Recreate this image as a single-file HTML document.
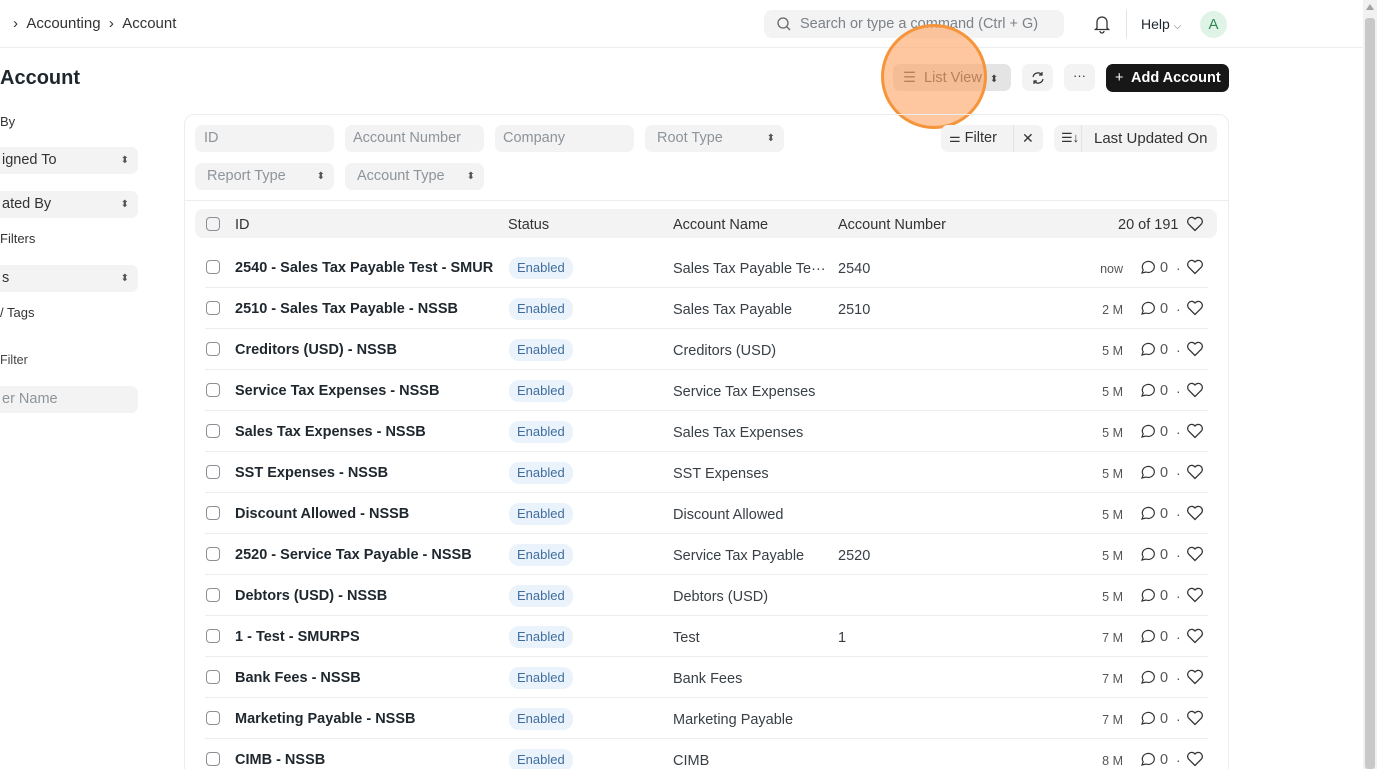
<!DOCTYPE html>
<html style="overflow:hidden;height:769px"><head><meta charset="utf-8">
<style>
*{box-sizing:border-box;margin:0;padding:0}
body{width:1377px;height:769px;overflow:hidden;background:#fff;font-family:"Liberation Sans",sans-serif;color:#1f272e;position:relative}
.a{position:absolute;white-space:nowrap}
.sel{position:absolute;background:#f3f3f3;border-radius:7px;height:27px;font-size:14.5px;color:#8d949a;line-height:27px;padding-left:12px}
.car{position:absolute;right:10px;top:0;font-size:10px;color:#555;letter-spacing:-1px}
.row{position:absolute;left:205px;width:1003px;height:41px;border-bottom:1px solid #ebeef0}
.cb{position:absolute;left:1px;width:14px;height:14px;border:1.3px solid #8a8f94;border-radius:4px}
.id{position:absolute;left:30px;font-size:14.5px;font-weight:bold;color:#1f272e}
.badge{position:absolute;left:304px;background:#eaf2fb;color:#3f6e9e;font-size:13px;border-radius:10px;padding:0 8px;height:22px;line-height:22px}
.nm{position:absolute;left:468px;font-size:14.5px;color:#383f45}
.num{position:absolute;left:633px;font-size:14.5px;color:#383f45}
.tm{position:absolute;right:85px;font-size:12.5px;color:#555}
.ic{position:absolute;left:934px}
.zero{position:absolute;left:955px;font-size:14.5px;color:#555}
.dot{position:absolute;left:971px;font-size:14px;color:#555}
.hr{position:absolute;left:981px}
.btn{position:absolute;background:#f3f3f3;border-radius:7px;height:27px}
</style></head><body>
<div class="a" style="left:13px;top:15px;font-size:15px;color:#333">›&nbsp;&nbsp;Accounting&nbsp;&nbsp;›&nbsp;&nbsp;Account</div>
<div class="a" style="left:764px;top:10px;width:300px;height:28px;background:#f3f3f3;border-radius:8px"></div>
<svg class="a" style="left:776px;top:16px" width="16" height="16" viewBox="0 0 16 16"><circle cx="7" cy="7" r="5" fill="none" stroke="#666" stroke-width="1.3"/><path d="M11 11l3 3" stroke="#666" stroke-width="1.3"/></svg>
<div class="a" style="left:800px;top:16px;font-size:14.5px;color:#7c8288">Search or type a command (Ctrl + G)</div>
<svg class="a" style="left:1093px;top:14px" width="18" height="20" viewBox="0 0 18 20"><path d="M4 14V8a5 5 0 0110 0v6l1.5 1.5h-13z M7 17a2 2 0 004 0" fill="none" stroke="#333" stroke-width="1.3"/></svg>
<div class="a" style="left:1126px;top:10px;width:1px;height:28px;background:#e5e5e5"></div>
<div class="a" style="left:1141px;top:16px;font-size:14px;color:#1f272e">Help <span style="font-size:10px;color:#666">⌵</span></div>
<div class="a" style="left:1200px;top:11px;width:27px;height:27px;border-radius:50%;background:#dff3e6;color:#2f8a55;font-size:15px;text-align:center;line-height:27px">A</div>
<div class="a" style="left:0;top:47px;width:1363px;height:1px;background:#eceeef"></div>

<div class="a" style="left:0;top:67px;font-size:20px;font-weight:bold">Account</div>
<div class="btn" style="left:893px;top:64px;width:118px;background:#e4e4e4"></div>
<div class="a" style="left:903px;top:70px;font-size:14.5px;color:#444">☰&nbsp; List View&nbsp; <span style="font-size:10px">⬍</span></div>
<div class="btn" style="left:1022px;top:64px;width:31px"></div>
<svg class="a" style="left:1030px;top:70px" width="16" height="16" viewBox="0 0 16 16"><path d="M3 7a5 5 0 019-2M13 9a5 5 0 01-9 2M12 2v3H9M4 14v-3h3" fill="none" stroke="#333" stroke-width="1.2"/></svg>
<div class="btn" style="left:1064px;top:64px;width:31px"></div>
<div class="a" style="left:1073px;top:68px;font-size:13px;color:#333">···</div>
<div class="a" style="left:1106px;top:64px;width:123px;height:28px;background:#171717;border-radius:7px;color:#fff;font-size:14.5px;font-weight:bold;line-height:28px;padding-left:9px"><span style="font-weight:normal">+</span>&nbsp; Add Account</div>
<div class="a" style="left:881px;top:24px;width:106px;height:105px;border-radius:50%;background:rgba(253,165,100,0.62);border:3px solid #f6943a"></div>

<div class="a" style="left:0;top:114px;font-size:13px;color:#333">By</div>
<div class="sel" style="left:-10px;top:147px;width:148px;color:#333">igned To<span class="car">⬍</span></div>
<div class="sel" style="left:-10px;top:191px;width:148px;color:#333">ated By<span class="car">⬍</span></div>
<div class="a" style="left:0;top:231px;font-size:13px;color:#333">Filters</div>
<div class="sel" style="left:-10px;top:265px;width:148px;color:#333">s<span class="car">⬍</span></div>
<div class="a" style="left:0;top:305px;font-size:13px;color:#333">/ Tags</div>
<div class="a" style="left:0;top:353px;font-size:12.5px;color:#444">Filter</div>
<div class="sel" style="left:-10px;top:386px;width:148px">er Name</div>

<div class="a" style="left:184px;top:114px;width:1045px;height:680px;border:1px solid #ededed;border-radius:10px"></div>
<div class="sel" style="left:195px;top:125px;width:139px;padding-left:9px">ID</div>
<div class="sel" style="left:345px;top:125px;width:139px;padding-left:8px">Account Number</div>
<div class="sel" style="left:495px;top:125px;width:139px;padding-left:8px">Company</div>
<div class="sel" style="left:645px;top:125px;width:139px">Root Type<span class="car">⬍</span></div>
<div class="sel" style="left:195px;top:163px;width:139px">Report Type<span class="car">⬍</span></div>
<div class="sel" style="left:345px;top:163px;width:139px">Account Type<span class="car">⬍</span></div>
<div class="btn" style="left:941px;top:125px;width:102px"></div>
<div class="a" style="left:1013px;top:125px;width:1px;height:27px;background:#e2e2e2"></div>
<div class="a" style="left:949px;top:130px;font-size:14.5px;color:#333"><span style="font-size:13px">⚌</span> Filter</div>
<div class="a" style="left:1022px;top:130px;font-size:14px;color:#333">✕</div>
<div class="btn" style="left:1054px;top:125px;width:163px"></div>
<div class="a" style="left:1081px;top:125px;width:1px;height:27px;background:#e2e2e2"></div>
<div class="a" style="left:1061px;top:130px;font-size:13px;color:#333">☰↓</div>
<div class="a" style="left:1094px;top:130px;font-size:15px;color:#333">Last Updated On</div>
<div class="a" style="left:185px;top:200px;width:1043px;height:1px;background:#ededed"></div>

<div class="a" style="left:195px;top:209px;width:1022px;height:29px;background:#f3f3f3;border-radius:8px"></div>
<div class="cb" style="left:206px;top:217px;position:absolute"></div>
<div class="a" style="left:235px;top:217px;font-size:14.5px;color:#333">ID</div>
<div class="a" style="left:508px;top:217px;font-size:14.5px;color:#333">Status</div>
<div class="a" style="left:673px;top:217px;font-size:14.5px;color:#333">Account Name</div>
<div class="a" style="left:838px;top:217px;font-size:14.5px;color:#333">Account Number</div>
<div class="a" style="left:1118px;top:217px;font-size:14.5px;color:#333">20 of 191</div>
<svg class="a" style="left:1186px;top:216px" width="18" height="16" viewBox="0 0 18 16"><path d="M9 14.5L2.5 8A3.8 3.8 0 019 3a3.8 3.8 0 016.5 5z" fill="none" stroke="#333" stroke-width="1.3"/></svg>

<div id="rows"></div>
<script>
var d=[["2540 - Sales Tax Payable Test - SMUR","Sales Tax Payable Te···","2540","now"],["2510 - Sales Tax Payable - NSSB","Sales Tax Payable","2510","2 M"],["Creditors (USD) - NSSB","Creditors (USD)","","5 M"],["Service Tax Expenses - NSSB","Service Tax Expenses","","5 M"],["Sales Tax Expenses - NSSB","Sales Tax Expenses","","5 M"],["SST Expenses - NSSB","SST Expenses","","5 M"],["Discount Allowed - NSSB","Discount Allowed","","5 M"],["2520 - Service Tax Payable - NSSB","Service Tax Payable","2520","5 M"],["Debtors (USD) - NSSB","Debtors (USD)","","5 M"],["1 - Test - SMURPS","Test","1","7 M"],["Bank Fees - NSSB","Bank Fees","","7 M"],["Marketing Payable - NSSB","Marketing Payable","","7 M"],["CIMB - NSSB","CIMB","","8 M"]];
var h="";
d.forEach(function(r,i){var t=247+i*41;
h+='<div class="row" style="top:'+t+'px"><div class="cb" style="top:13px"></div><div class="id" style="top:13px">'+r[0]+'</div><div class="badge" style="top:10px">Enabled</div><div class="nm" style="top:14px">'+r[1]+'</div><div class="num" style="top:14px">'+r[2]+'</div><div class="tm" style="top:15px">'+r[3]+'</div><svg class="ic" style="top:12px" width="18" height="17" viewBox="0 0 18 17"><path d="M3 14l1.2-3.2A6 5.5 0 1 1 7 13z" fill="none" stroke="#333" stroke-width="1.2"/></svg><div class="zero" style="top:13px">0</div><div class="dot" style="top:13px">·</div><svg class="hr" style="top:12px" width="18" height="16" viewBox="0 0 18 16"><path d="M9 14.5L2.5 8A3.8 3.8 0 019 3a3.8 3.8 0 016.5 5z" fill="none" stroke="#333" stroke-width="1.3"/></svg></div>';});
document.getElementById("rows").innerHTML=h;
</script>

<div class="a" style="left:1363px;top:0;width:14px;height:769px;background:#f1f1f1"></div>
<div class="a" style="left:1365px;top:18px;width:10px;height:751px;background:#c8c8c8;border-radius:3px"></div>
<div class="a" style="left:1366px;top:4px;width:0;height:0;border-left:4px solid transparent;border-right:4px solid transparent;border-bottom:6px solid #a3a3a3"></div>
</body></html>
